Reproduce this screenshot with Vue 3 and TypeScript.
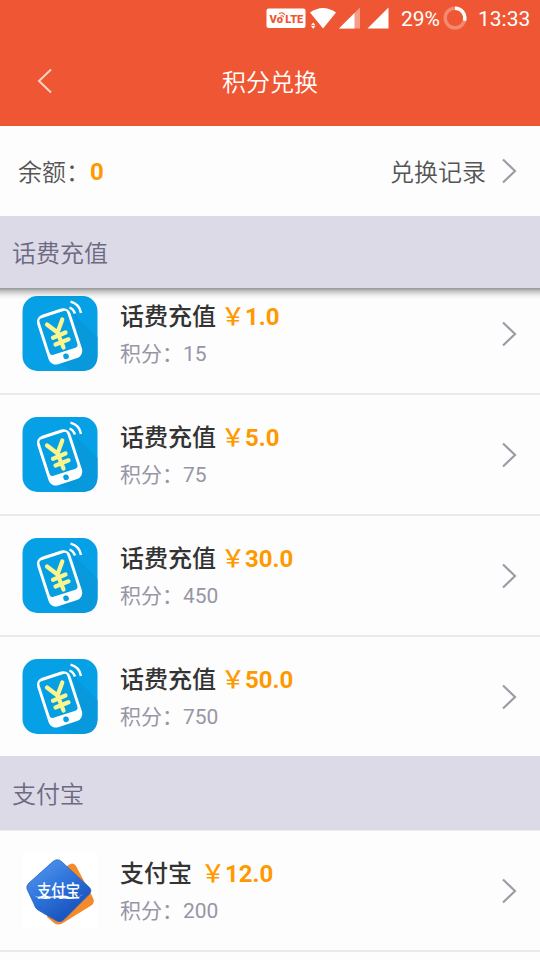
<script setup lang="ts">
interface Offer {
  name: string
  price: string
  points: number
}

const topUps: Offer[] = [
  { name: '话费充值', price: '1.0', points: 15 },
  { name: '话费充值', price: '5.0', points: 75 },
  { name: '话费充值', price: '30.0', points: 450 },
  { name: '话费充值', price: '50.0', points: 750 },
]
const alipay: Offer[] = [{ name: '支付宝', price: '12.0', points: 200 }]
const groups = [
  { title: '话费充值', kind: 'phone', offers: topUps },
  { title: '支付宝', kind: 'alipay', offers: alipay },
]
</script>

<template>
  <main class="screen">
    <div class="status">
      <svg class="signals" width="130" height="36" viewBox="0 0 130 36">
        <rect x="6.500" y="8.500" width="39" height="19.500" rx="2" fill="#fff" />
        <text class="volte" x="9.500" y="23.200">V</text>
        <text class="volte" x="16.700" y="23.200">o</text>
        <text class="volte" x="25.300" y="23.200" textLength="18" lengthAdjust="spacingAndGlyphs">LTE</text>
        <path d="M19 13.800q3.500-2.500 5.700 1.200M20.500 16.200q2-1.200 3.200 1" fill="none" stroke="#ef5734" stroke-width="1.100" />
        <path d="M50 12.500Q63 3.500 76 12.500L63 28.500Z" fill="#fff" />
        <path d="M51 25.300l2.200-2.700 2.200 2.700zM51 26l2.200 2.700 2.200-2.700z" fill="#fff" />
        <path d="M79 28.500L100 7.500V28.500Z" fill="#fff" opacity=".42" />
        <path d="M79 28.500L94.500 13V28.500Z" fill="#fff" />
        <path d="M107.500 28.500L128.500 7.500V28.500Z" fill="#fff" />
      </svg>
      <span class="percent">29%</span>
      <svg class="battery" width="24" height="24" viewBox="0 0 24 24" fill="none" stroke="#fff" stroke-width="3.400">
        <circle cx="12" cy="12" r="9.800" opacity=".3" />
        <path d="M12 2.200A9.800 9.800 0 0 1 21.400 14.700" />
      </svg>
      <span class="clock">13:33</span>
    </div>

    <header class="navbar">
      <svg class="back" width="16" height="28" viewBox="0 0 16 28"><path d="M14 2.500L2 14L14 25.500" /></svg>
      <h1>积分兑换</h1>
    </header>

    <section class="balance">
      <span class="balance-label">余额：</span><b>0</b>
      <span class="history">兑换记录</span>
      <svg class="arrow" width="16" height="28" viewBox="0 0 16 28"><path d="M2 2.500L14 14L2 25.500" /></svg>
    </section>

    <section v-for="group in groups" :key="group.kind" :class="['group', group.kind]">
      <h2>{{ group.title }}</h2>
      <ul>
        <li v-for="offer in group.offers" :key="offer.price">
          <svg v-if="group.kind === 'phone'" class="logo" viewBox="0 0 76 76">
            <rect x=".500" y="0" width="75" height="75" rx="15" fill="#05a0e6" />
            <path d="M51 17L75.500 41V60Q75 75 60 75H51L38 68L59 56Z" fill="#0899dd" />
            <g transform="rotate(-18 37.600 40.400)">
              <rect x="20.100" y="14.400" width="35" height="52" rx="7.500" fill="#fff" />
              <rect x="23" y="17.500" width="29.200" height="38.500" rx="3" fill="#079fe4" />
              <circle cx="37.600" cy="61.300" r="2.800" fill="#079fe4" />
            </g>
            <path d="M25 28.500L35.500 36.500L40.300 23.500M35.500 36.500L41.500 51.500M31 41.700L43.500 36.500M33.500 48.500L46.500 43.300" fill="none" stroke="#fbf58d" stroke-width="4.200" stroke-linecap="round" stroke-linejoin="round" />
            <path d="M47.500 11.500Q51.500 13 53 17.500M48.500 5.700Q57.500 8 59 17" fill="none" stroke="#fff" stroke-width="2.400" />
          </svg>
          <svg v-else class="logo" viewBox="0 0 76 76">
            <defs>
              <linearGradient id="blue" x1="0" y1="0" x2=".7" y2="1">
                <stop offset="0" stop-color="#5a9cf0" />
                <stop offset=".5" stop-color="#2f74dc" />
                <stop offset="1" stop-color="#164db7" />
              </linearGradient>
            </defs>
            <rect width="76" height="76" fill="#fff" />
            <path d="M45 13Q51 8 54 13L71 45Q73 49 70 52L41 70Q36 73 32 70L25 64Z" fill="#f58a2b" />
            <path d="M31 8.500Q35.500 5 39.500 8.500L67 34Q70.500 37.500 67.500 41L42 66.500Q38 70.500 33 67L16 57Q13 55 12 51L5 36Q4 33 7 30Z" fill="url(#blue)" stroke="#2763c0" stroke-width=".8" />
            <text class="alipay-word" x="15" y="43.500" textLength="43" lengthAdjust="spacingAndGlyphs">支付宝</text>
            <path d="M11.500 42.500Q18 45.500 30 43.500T48 44T62 40.500Q54 47.500 42 45.500T26 45.500T11.500 42.500Z" fill="#fff" />
          </svg>
          <div class="details">
            <div class="name">{{ offer.name }}<span class="price"><i>￥</i>{{ offer.price }}</span></div>
            <div class="points">积分：{{ offer.points }}</div>
          </div>
          <svg class="arrow" width="16" height="28" viewBox="0 0 16 28"><path d="M2 2.500L14 14L2 25.500" /></svg>
        </li>
      </ul>
    </section>
  </main>
</template>

<style>
body {
  margin: 0;
}
</style>

<style scoped>
.screen {
  width: 540px;
  height: 960px;
  overflow: hidden;
  background: #fdfdfd;
  font-family: Roboto, "Noto Sans CJK SC", sans-serif;
  color: #555;
}
.status {
  height: 36px;
  display: flex;
  align-items: center;
  padding-left: 260px;
  background: #ef5734;
  color: #fff;
  font-size: 21px;
  line-height: 36px;
  white-space: nowrap;
}
.signals {
  flex: none;
}
.volte {
  font: 900 11.2px Roboto, sans-serif;
  fill: #ef5734;
}
.percent {
  width: 41px;
  margin-left: 11px;
  padding-top: 2px;
}
.battery {
  flex: none;
  margin-left: 1px;
}
.clock {
  margin-left: 11px;
  padding-top: 2px;
}
.navbar {
  height: 90px;
  display: grid;
  grid-template-columns: 60px 1fr 60px;
  align-items: center;
  background: #ef5734;
  color: #fff;
}
.back {
  margin-left: 37px;
  fill: none;
  stroke: #fbd3c8;
  stroke-width: 2;
}
h1 {
  margin: 0;
  padding-top: 3px;
  font-size: 24px;
  font-weight: 350;
  line-height: 36px;
  text-align: center;
}
.balance {
  height: 90px;
  box-sizing: border-box;
  padding: 0 23px 0 18px;
  display: flex;
  align-items: center;
  font-size: 24px;
}
.balance-label,
.history {
  padding-bottom: 2px;
  font-weight: 350;
}
.balance b {
  padding-top: 1px;
  color: #f90;
}
.history {
  margin-left: auto;
  margin-right: 15px;
}
.arrow {
  flex: none;
  fill: none;
  stroke: #9c9ca6;
  stroke-width: 2.2;
}
.group h2 {
  position: relative;
  z-index: 1;
  height: 72px;
  box-sizing: border-box;
  margin: 0;
  padding: 3px 0 0 12px;
  background: #dcdae7;
  color: #6c6982;
  font-size: 24px;
  font-weight: 350;
  line-height: 70px;
}
.phone h2::after {
  content: "";
  position: absolute;
  top: 100%;
  left: 0;
  right: 0;
  height: 11px;
  background: linear-gradient(rgba(0, 0, 0, 0.42), rgba(0, 0, 0, 0.22) 30%, rgba(0, 0, 0, 0.07) 65%, transparent);
}
.phone ul {
  margin-top: -14px;
}
.alipay h2 {
  height: 75px;
  line-height: 73px;
  border-bottom: 1px solid #ececf0;
}
ul {
  margin: 0;
  padding: 0;
  list-style: none;
}
li {
  height: 121px;
  box-sizing: border-box;
  display: flex;
  align-items: flex-start;
  padding: 22px 23px 0 22px;
  border-bottom: 2px solid #eaeaec;
}
.phone li:last-child {
  height: 119px;
  border-bottom: 0;
}
.logo {
  width: 76px;
  height: 76px;
  flex: none;
}
.details {
  margin-left: 22px;
}
.name {
  height: 41px;
  padding-top: 1px;
  color: #333;
  font-size: 24px;
  font-weight: 500;
  line-height: 41px;
  white-space: nowrap;
}
.price {
  margin-left: 5px;
  color: #f90;
  font-weight: 700;
}
.alipay .price {
  margin-left: 9px;
}
.price i {
  font-style: normal;
  font-weight: 500;
}
.points {
  color: #9796a6;
  font-size: 21px;
  font-weight: 400;
  line-height: 33px;
}
li .arrow {
  margin: 23.5px 0 0 auto;
}
.alipay-word {
  font: 500 16.5px "Noto Sans CJK SC", sans-serif;
  fill: #fff;
}
</style>
